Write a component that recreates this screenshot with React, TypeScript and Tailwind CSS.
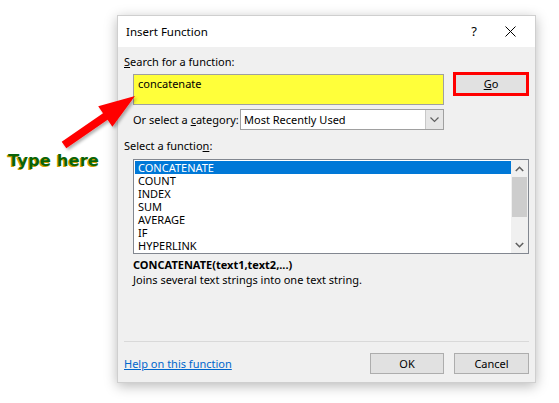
import React from "react";

const functions = ["CONCATENATE", "COUNT", "INDEX", "SUM", "AVERAGE", "IF", "HYPERLINK"];

const Button = ({ children, className = "" }: { children: React.ReactNode; className?: string }) => (
  <div
    className={`flex h-[21px] items-center justify-center border border-[#adadad] bg-[#e1e1e1] text-black ${className}`}
  >
    {children}
  </div>
);

const Arrow = () => (
  <svg className="pointer-events-none absolute left-0 top-0" width="559" height="403" viewBox="0 0 559 403">
    <defs>
      <filter id="arrowShadow" x="-20%" y="-20%" width="140%" height="140%">
        <feDropShadow dx="2" dy="2" stdDeviation="1.5" floodColor="#000" floodOpacity="0.3" />
      </filter>
    </defs>
    <polygon
      points="61.7,141.7 103,113.2 98.2,106.2 135,96 112.4,126.8 107.6,119.8 66.3,148.3"
      fill="#ff0000"
      filter="url(#arrowShadow)"
    />
  </svg>
);

export default function App() {
  return (
    <div className="relative h-[403px] w-[559px] overflow-hidden bg-white font-['Noto_Sans',sans-serif]">
      <div className="flex pl-[117px] pt-[15px]">
        <div className="flex h-[368px] w-[419px] flex-col border border-[#cfcfcf] bg-[#f0f0f0] shadow-[0_3px_12px_rgba(0,0,0,0.28)]">
          {/* title bar */}
          <div className="flex h-[31px] items-center bg-white pl-[8px] text-[11.5px] text-black">
            <span className="flex-1">Insert Function</span>
            <span className="w-[30px] text-center text-[13px]">?</span>
            <span className="flex w-[46px] justify-center pr-[4px]">
              <svg width="11" height="11" viewBox="0 0 11 11">
                <path d="M0.5 0.5 L10.5 10.5 M10.5 0.5 L0.5 10.5" stroke="#000" strokeWidth="1" />
              </svg>
            </span>
          </div>

          {/* body */}
          <div className="flex flex-1 flex-col pl-[6px] pr-[6px] text-[11px] leading-[16px] text-black">
            <div className="mt-[7px]">
              <span className="underline">S</span>earch for a function:
            </div>

            <div className="mt-[4px] flex items-start pl-[9px]">
              <div className="h-[31px] w-[311px] border border-[#a0a0a0] bg-[#ffff3a] px-[4px] pt-[1px]">concatenate</div>
              <div className="ml-[9px] mt-[-2px] h-[24px] w-[76px] border-[3px] border-[#ff0000]">
                <div className="flex h-full items-center justify-center bg-[#e1e1e1]">
                  <span className="underline">G</span>o
                </div>
              </div>
            </div>

            <div className="mt-[4px] flex items-center pl-[9px]">
              <span className="w-[107px] whitespace-nowrap">
                Or select a <span className="underline">c</span>ategory:
              </span>
              <div className="flex h-[21px] w-[204px] items-center border border-[#a0a0a0] bg-white">
                <span className="flex-1 pl-[3px]">Most Recently Used</span>
                <span className="flex h-full w-[18px] items-center justify-center border-l border-[#c8c8c8] bg-[#e6e6e6]">
                  <svg width="9" height="6" viewBox="0 0 9 6">
                    <path d="M0.5 0.5 L4.5 4.5 L8.5 0.5" fill="none" stroke="#606060" strokeWidth="1.2" />
                  </svg>
                </span>
              </div>
            </div>

            <div className="mt-[8px]">
              Select a functio<span className="underline">n</span>:
            </div>

            <div className="ml-[9px] mt-[5px] flex h-[95px] w-[396px] border border-[#828790] bg-white">
              <div className="flex-1 pl-[1px] pt-[1px]">
                {functions.map((f, i) => (
                  <div
                    key={f}
                    className={`h-[13px] pl-[3px] leading-[13px] ${i === 0 ? "bg-[#0078d7] text-white" : "text-black"}`}
                  >
                    {f}
                  </div>
                ))}
              </div>
              <div className="flex w-[17px] flex-col bg-[#f0f0f0]">
                <div className="flex h-[17px] items-center justify-center">
                  <svg width="9" height="6" viewBox="0 0 9 6">
                    <path d="M0.8 5 L4.5 1.3 L8.2 5" fill="none" stroke="#606060" strokeWidth="1.6" />
                  </svg>
                </div>
                <div className="mx-[1px] h-[40px] bg-[#cdcdcd]" />
                <div className="flex-1" />
                <div className="flex h-[17px] items-center justify-center">
                  <svg width="9" height="6" viewBox="0 0 9 6">
                    <path d="M0.8 1 L4.5 4.7 L8.2 1" fill="none" stroke="#606060" strokeWidth="1.6" />
                  </svg>
                </div>
              </div>
            </div>

            <div className="ml-[9px] mt-[3px] font-bold">CONCATENATE(text1,text2,...)</div>
            <div className="ml-[9px] mt-[-1px]">Joins several text strings into one text string.</div>

            <div className="flex-1" />
            <div className="h-px bg-[#d9d9d9]" />

            <div className="mb-[8px] mt-[11px] flex items-center">
              <span className="flex-1 text-[#0066cc] underline">Help on this function</span>
              <Button className="w-[74px]">OK</Button>
              <Button className="ml-[10px] w-[75px]">Cancel</Button>
            </div>
          </div>
        </div>
      </div>

      <div className="absolute left-[8px] top-[149px] font-['DejaVu_Sans',sans-serif] text-[16.5px] font-bold text-[#0a6408] [text-shadow:-1px_1px_0_#d4a000]">
        Type here
      </div>

      <Arrow />
    </div>
  );
}
